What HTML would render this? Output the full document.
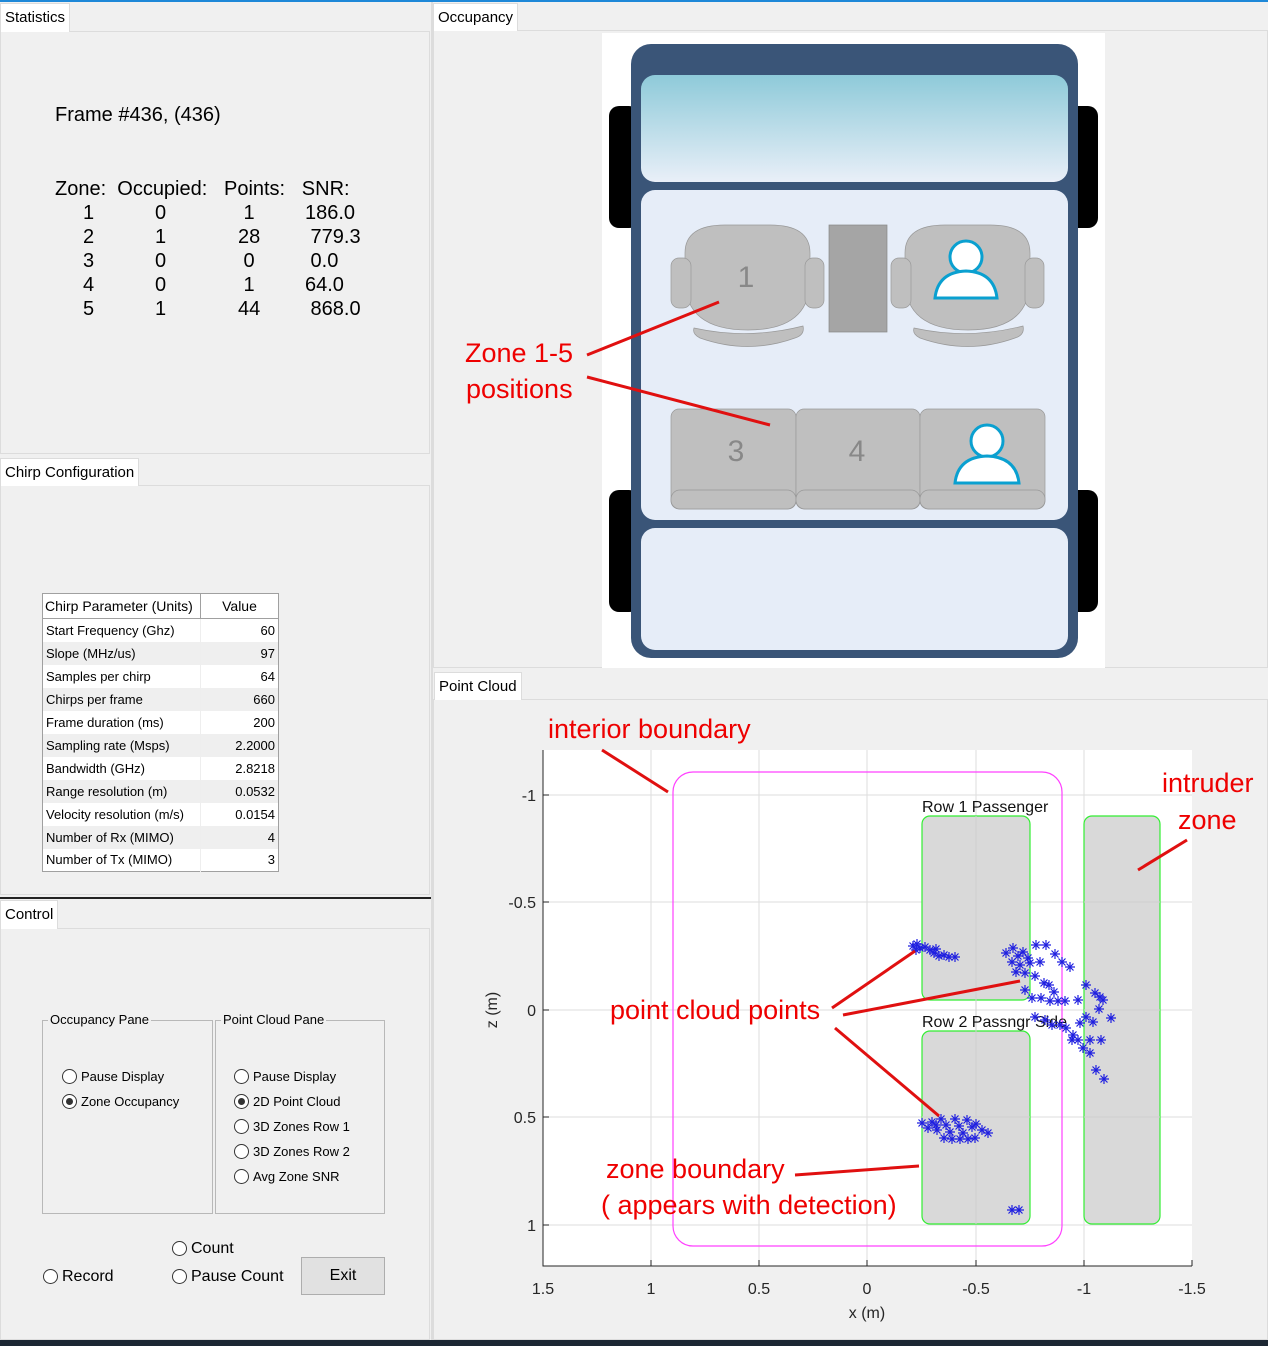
<!DOCTYPE html>
<html><head><meta charset="utf-8"><style>
*{margin:0;padding:0;box-sizing:border-box}
body{width:1268px;height:1346px;background:#f0f0f0;position:relative;overflow:hidden;font-family:"Liberation Sans",sans-serif;color:#000}
.a{position:absolute}
.tab{position:absolute;background:#fff;font-size:15px;padding:5px 4px;border:1px solid #dcdcdc;border-bottom:none}
.pan{position:absolute;border:1px solid #dcdcdc;background:#f0f0f0}
.st{font-size:20px;position:absolute;white-space:pre}
table.c{position:absolute;left:42px;top:593px;width:237px;border-collapse:collapse;font-size:13px;border:1px solid #a0a0a0;background:#fff;table-layout:fixed}
table.c td{height:23px;padding:0 3px;white-space:nowrap;overflow:hidden}
table.c td+td{text-align:right;border-left:1px solid #eee}
table.c tr:nth-child(odd) td{background:#efefef}
table.c tr:first-child td{background:#fff;height:25px;font-size:14px;border-bottom:1px solid #a0a0a0;text-align:left;padding:0 2px}
table.c tr:first-child td+td{text-align:center;border-left:1px solid #a0a0a0}
.r{position:absolute;font-size:13px;white-space:nowrap}
.r i{display:inline-block;width:15px;height:15px;border:1px solid #333;border-radius:50%;vertical-align:-3px;margin-right:4px;background:#fff;position:relative}
.r i.on::after{content:"";position:absolute;left:3px;top:3px;width:7px;height:7px;border-radius:50%;background:#333}
.big{font-size:16px}
.grp{position:absolute;border:1px solid #b8b8b8}
.grp span{position:absolute;top:-9px;left:5px;background:#f0f0f0;font-size:13px;padding:0 2px}
.red{position:absolute;color:#e00;font-size:27px;white-space:nowrap}
</style></head><body>
<div class="a" style="left:0;top:0;width:1268px;height:2px;background:#1e88d8"></div>
<div class="pan" style="left:0;top:31px;width:430px;height:423px"></div>
<div class="tab" style="left:0;top:3px;height:29px">Statistics</div>
<div class="st" style="left:55px;top:104px">Frame #436, (436)</div>
<div class="st" style="left:55px;top:177px;line-height:24px">Zone:  Occupied:   Points:   SNR:</div>
<div class="st" style="left:83px;top:201px;line-height:24px">1<br>2<br>3<br>4<br>5</div>
<div class="st" style="left:155px;top:201px;line-height:24px">0<br>1<br>0<br>0<br>1</div>
<div class="st" style="left:238px;top:201px;line-height:24px"> 1<br>28<br> 0<br> 1<br>44</div>
<div class="st" style="left:305px;top:201px;line-height:24px">186.0<br> 779.3<br> 0.0<br>64.0<br> 868.0</div>

<div class="pan" style="left:0;top:485px;width:430px;height:410px"></div>
<div class="tab" style="left:0;top:458px;height:28px">Chirp Configuration</div>
<table class="c">
<colgroup><col style="width:158px"><col></colgroup>
<tr><td>Chirp Parameter (Units)</td><td>Value</td></tr>
<tr><td>Start Frequency (Ghz)</td><td>60</td></tr>
<tr><td>Slope (MHz/us)</td><td>97</td></tr>
<tr><td>Samples per chirp</td><td>64</td></tr>
<tr><td>Chirps per frame</td><td>660</td></tr>
<tr><td>Frame duration (ms)</td><td>200</td></tr>
<tr><td>Sampling rate (Msps)</td><td>2.2000</td></tr>
<tr><td>Bandwidth (GHz)</td><td>2.8218</td></tr>
<tr><td>Range resolution (m)</td><td>0.0532</td></tr>
<tr><td>Velocity resolution (m/s)</td><td>0.0154</td></tr>
<tr><td>Number of Rx (MIMO)</td><td>4</td></tr>
<tr><td>Number of Tx (MIMO)</td><td>3</td></tr>
</table>
<div class="a" style="left:0;top:897px;width:432px;height:2px;background:#222"></div>
<div class="pan" style="left:0;top:928px;width:430px;height:412px"></div>
<div class="tab" style="left:0;top:900px;height:29px">Control</div>
<div class="grp" style="left:42px;top:1020px;width:171px;height:194px"><span>Occupancy Pane</span></div>
<div class="grp" style="left:215px;top:1020px;width:170px;height:194px"><span>Point Cloud Pane</span></div>
<div class="r" style="left:62px;top:1069px"><i></i>Pause Display</div>
<div class="r" style="left:62px;top:1094px"><i class="on"></i>Zone Occupancy</div>
<div class="r" style="left:234px;top:1069px"><i></i>Pause Display</div>
<div class="r" style="left:234px;top:1094px"><i class="on"></i>2D Point Cloud</div>
<div class="r" style="left:234px;top:1119px"><i></i>3D Zones Row 1</div>
<div class="r" style="left:234px;top:1144px"><i></i>3D Zones Row 2</div>
<div class="r" style="left:234px;top:1169px"><i></i>Avg Zone SNR</div>
<div class="r big" style="left:172px;top:1240px"><i></i>Count</div>
<div class="r big" style="left:43px;top:1268px"><i></i>Record</div>
<div class="r big" style="left:172px;top:1268px"><i></i>Pause Count</div>
<div class="a" style="left:301px;top:1257px;width:84px;height:38px;background:#e1e1e1;border:1px solid #adadad;font-size:16px;text-align:center;line-height:36px">Exit</div>

<div class="a" style="left:431px;top:2px;width:2px;height:1340px;background:#dcdcdc"></div>
<div class="pan" style="left:433px;top:30px;width:835px;height:638px"></div>
<div class="tab" style="left:433px;top:3px;height:28px">Occupancy</div>
<div class="pan" style="left:433px;top:699px;width:835px;height:641px"></div>
<div class="tab" style="left:434px;top:672px;height:28px">Point Cloud</div>

<svg class="a" style="left:0;top:0" width="1268" height="1346">
<defs>
<linearGradient id="ws" x1="0" y1="0" x2="0" y2="1"><stop offset="0" stop-color="#8ecad9"/><stop offset="1" stop-color="#e9eff8"/></linearGradient>
<g id="p" stroke="#2020e0" stroke-width="1.2"><path d="M-5 0H5M0-5V5M-3.5-3.5L3.5 3.5M-3.5 3.5L3.5-3.5"/></g>
</defs>
<rect x="602" y="33" width="503" height="635" fill="#fff"/>
<rect x="609" y="106" width="30" height="122" rx="10" fill="#000"/>
<rect x="1068" y="106" width="30" height="122" rx="10" fill="#000"/>
<rect x="609" y="490" width="30" height="122" rx="10" fill="#000"/>
<rect x="1068" y="490" width="30" height="122" rx="10" fill="#000"/>
<rect x="631" y="44" width="447" height="614" rx="20" fill="#3a5578"/>
<rect x="641" y="75" width="427" height="107" rx="14" fill="url(#ws)"/>
<rect x="641" y="190" width="427" height="330" rx="14" fill="#e6edf8"/>
<rect x="641" y="528" width="427" height="122" rx="14" fill="#e6edf8"/>
<g fill="#bfbfbf" stroke="#999" stroke-width="0.7">
<path d="M685 253Q685 225 725 225H770Q810 225 810 253V280Q810 330 748 330Q685 330 685 280Z"/>
<rect x="671" y="258" width="20" height="50" rx="8"/>
<rect x="805" y="258" width="19" height="50" rx="8"/>
<path d="M694 328Q748 340 803 326Q805 335 795 338Q748 355 700 338Q692 334 694 328Z"/>
<path d="M905 253Q905 225 945 225H990Q1030 225 1030 253V280Q1030 330 968 330Q905 330 905 280Z"/>
<rect x="891" y="258" width="20" height="50" rx="8"/>
<rect x="1025" y="258" width="19" height="50" rx="8"/>
<path d="M914 328Q968 340 1023 326Q1025 335 1015 338Q968 355 920 338Q912 334 914 328Z"/>
<rect x="671" y="409" width="125" height="100" rx="8"/>
<rect x="796" y="409" width="124" height="100" rx="8"/>
<rect x="920" y="409" width="125" height="100" rx="8"/>
<rect x="671" y="490" width="125" height="19" rx="9"/>
<rect x="796" y="490" width="124" height="19" rx="9"/>
<rect x="920" y="490" width="125" height="19" rx="9"/>
</g>
<rect x="829" y="225" width="58" height="107" fill="#a5a5a5" stroke="#888" stroke-width="0.7"/>
<g font-family="Liberation Sans,sans-serif" font-size="30" fill="#888" text-anchor="middle"><text x="746" y="287">1</text><text x="736" y="461">3</text><text x="857" y="461">4</text></g>
<g fill="#fff" stroke="#0aa0d0" stroke-width="3"><circle cx="966" cy="257" r="16"/><path d="M935 298Q938 272 966 271Q994 272 997 298Z"/><circle cx="987" cy="441" r="16"/><path d="M955 483Q958 457 987 456Q1016 457 1019 483Z"/></g>
<g stroke="#e01010" stroke-width="3"><line x1="587" y1="355" x2="719" y2="302"/><line x1="587" y1="377" x2="770" y2="425"/></g>

<rect x="543" y="750" width="649" height="516" fill="#fff"/>
<g stroke="#dedede" stroke-width="1"><line x1="651" y1="750" x2="651" y2="1266"/><line x1="759" y1="750" x2="759" y2="1266"/><line x1="867" y1="750" x2="867" y2="1266"/><line x1="976" y1="750" x2="976" y2="1266"/><line x1="1084" y1="750" x2="1084" y2="1266"/><line x1="543" y1="795" x2="1192" y2="795"/><line x1="543" y1="902" x2="1192" y2="902"/><line x1="543" y1="1010" x2="1192" y2="1010"/><line x1="543" y1="1117" x2="1192" y2="1117"/><line x1="543" y1="1225" x2="1192" y2="1225"/></g>
<path d="M543 750V1266H1192" fill="none" stroke="#262626"/>
<g stroke="#262626"><line x1="651" y1="1266" x2="651" y2="1260"/><line x1="759" y1="1266" x2="759" y2="1260"/><line x1="867" y1="1266" x2="867" y2="1260"/><line x1="976" y1="1266" x2="976" y2="1260"/><line x1="1084" y1="1266" x2="1084" y2="1260"/><line x1="1192" y1="1266" x2="1192" y2="1260"/><line x1="543" y1="795" x2="549" y2="795"/><line x1="543" y1="902" x2="549" y2="902"/><line x1="543" y1="1010" x2="549" y2="1010"/><line x1="543" y1="1117" x2="549" y2="1117"/><line x1="543" y1="1225" x2="549" y2="1225"/></g>
<g font-family="Liberation Sans,sans-serif" font-size="16" fill="#262626" text-anchor="middle"><text x="543" y="1294">1.5</text><text x="651" y="1294">1</text><text x="759" y="1294">0.5</text><text x="867" y="1294">0</text><text x="976" y="1294">-0.5</text><text x="1084" y="1294">-1</text><text x="1192" y="1294">-1.5</text><text x="867" y="1318">x (m)</text></g>
<g font-family="Liberation Sans,sans-serif" font-size="16" fill="#262626" text-anchor="end"><text x="536" y="801">-1</text><text x="536" y="908">-0.5</text><text x="536" y="1016">0</text><text x="536" y="1123">0.5</text><text x="536" y="1231">1</text></g>
<text x="497" y="1010" transform="rotate(-90 497 1010)" font-family="Liberation Sans,sans-serif" font-size="16" fill="#262626" text-anchor="middle">z (m)</text>
<rect x="673" y="772" width="389" height="474" rx="20" fill="none" stroke="#ff40ff" stroke-width="1.2"/>
<g fill="#d9d9d9" stroke="#33ee33" stroke-width="1.2"><rect x="922" y="816" width="108" height="184" rx="8"/><rect x="922" y="1031" width="108" height="193" rx="8"/><rect x="1084" y="816" width="76" height="408" rx="8"/></g>
<g stroke="#cfcfcf"><line x1="976" y1="816" x2="976" y2="1224"/><line x1="922" y1="1117" x2="1030" y2="1117"/><line x1="1084" y1="902" x2="1160" y2="902"/><line x1="1084" y1="1010" x2="1160" y2="1010"/><line x1="1084" y1="1117" x2="1160" y2="1117"/></g>
<g font-family="Liberation Sans,sans-serif" font-size="16" fill="#111"><text x="922" y="812">Row 1 Passenger</text><text x="922" y="1027">Row 2 Passngr Side</text></g>
<g>
<use href="#p" x="913" y="946"/><use href="#p" x="917" y="944"/><use href="#p" x="920" y="948"/><use href="#p" x="925" y="947"/><use href="#p" x="930" y="950"/><use href="#p" x="934" y="953"/><use href="#p" x="939" y="956"/><use href="#p" x="944" y="955"/><use href="#p" x="949" y="957"/><use href="#p" x="955" y="957"/><use href="#p" x="936" y="949"/><use href="#p" x="916" y="950"/>
<use href="#p" x="1006" y="953"/><use href="#p" x="1013" y="948"/><use href="#p" x="1018" y="956"/><use href="#p" x="1023" y="952"/><use href="#p" x="1028" y="958"/><use href="#p" x="1012" y="962"/><use href="#p" x="1020" y="965"/><use href="#p" x="1030" y="963"/><use href="#p" x="1036" y="945"/><use href="#p" x="1046" y="945"/><use href="#p" x="1055" y="954"/><use href="#p" x="1040" y="962"/><use href="#p" x="1062" y="962"/><use href="#p" x="1070" y="967"/><use href="#p" x="1016" y="972"/><use href="#p" x="1025" y="973"/><use href="#p" x="1035" y="976"/><use href="#p" x="1044" y="983"/><use href="#p" x="1049" y="985"/><use href="#p" x="1054" y="992"/><use href="#p" x="1025" y="990"/><use href="#p" x="1032" y="998"/><use href="#p" x="1041" y="998"/><use href="#p" x="1050" y="1001"/><use href="#p" x="1058" y="1001"/><use href="#p" x="1065" y="1001"/><use href="#p" x="1078" y="1000"/><use href="#p" x="1086" y="985"/><use href="#p" x="1095" y="993"/><use href="#p" x="1100" y="997"/><use href="#p" x="1099" y="1009"/><use href="#p" x="1103" y="1000"/><use href="#p" x="1111" y="1018"/><use href="#p" x="1086" y="1017"/><use href="#p" x="1093" y="1022"/><use href="#p" x="1035" y="1017"/><use href="#p" x="1045" y="1020"/><use href="#p" x="1052" y="1025"/><use href="#p" x="1060" y="1025"/><use href="#p" x="1066" y="1028"/><use href="#p" x="1073" y="1035"/><use href="#p" x="1078" y="1040"/><use href="#p" x="1072" y="1040"/><use href="#p" x="1083" y="1048"/><use href="#p" x="1090" y="1053"/><use href="#p" x="1101" y="1040"/><use href="#p" x="1096" y="1070"/><use href="#p" x="1104" y="1079"/><use href="#p" x="1090" y="1040"/><use href="#p" x="1080" y="1023"/>
<use href="#p" x="922" y="1123"/><use href="#p" x="928" y="1128"/><use href="#p" x="932" y="1122"/><use href="#p" x="937" y="1130"/><use href="#p" x="941" y="1119"/><use href="#p" x="946" y="1125"/><use href="#p" x="950" y="1132"/><use href="#p" x="955" y="1119"/><use href="#p" x="959" y="1126"/><use href="#p" x="963" y="1133"/><use href="#p" x="967" y="1120"/><use href="#p" x="972" y="1127"/><use href="#p" x="976" y="1124"/><use href="#p" x="982" y="1130"/><use href="#p" x="988" y="1133"/><use href="#p" x="944" y="1138"/><use href="#p" x="952" y="1139"/><use href="#p" x="960" y="1139"/><use href="#p" x="968" y="1139"/><use href="#p" x="975" y="1138"/><use href="#p" x="936" y="1125"/>
<use href="#p" x="1012" y="1210"/><use href="#p" x="1019" y="1210"/>
</g>
<g stroke="#e01010" stroke-width="3"><line x1="602" y1="750" x2="668" y2="792"/><line x1="1138" y1="870" x2="1187" y2="840"/><line x1="832" y1="1008" x2="915" y2="951"/><line x1="843" y1="1015" x2="1020" y2="981"/><line x1="835" y1="1028" x2="939" y2="1116"/><line x1="795" y1="1175" x2="919" y2="1166"/></g>
<rect x="0" y="1340" width="1268" height="6" fill="#1c2733"/>
</svg>
<div class="red" style="left:465px;top:338px">Zone 1-5</div>
<div class="red" style="left:466px;top:374px">positions</div>
<div class="red" style="left:548px;top:714px">interior boundary</div>
<div class="red" style="left:1162px;top:768px">intruder</div>
<div class="red" style="left:1178px;top:805px">zone</div>
<div class="red" style="left:610px;top:995px">point cloud points</div>
<div class="red" style="left:606px;top:1154px">zone boundary</div>
<div class="red" style="left:601px;top:1190px">( appears with detection)</div>
</body></html>
